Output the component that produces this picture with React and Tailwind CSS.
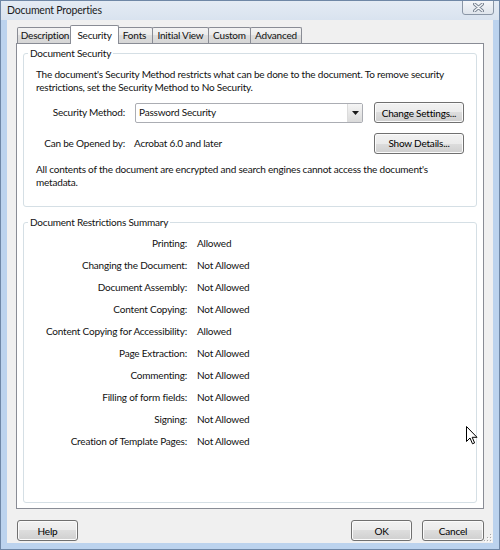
import { useState } from 'react'

const tabs = [
  { name: 'Description', width: 'w-[56px]' },
  { name: 'Security', width: 'w-[49px]' },
  { name: 'Fonts', width: 'w-[37px]' },
  { name: 'Initial View', width: 'w-[57px]' },
  { name: 'Custom', width: 'w-[43px]' },
  { name: 'Advanced', width: 'w-[52px]' },
]

const restrictions = [
  ['Printing', 'Allowed'],
  ['Changing the Document', 'Not Allowed'],
  ['Document Assembly', 'Not Allowed'],
  ['Content Copying', 'Not Allowed'],
  ['Content Copying for Accessibility', 'Allowed'],
  ['Page Extraction', 'Not Allowed'],
  ['Commenting', 'Not Allowed'],
  ['Filling of form fields', 'Not Allowed'],
  ['Signing', 'Not Allowed'],
  ['Creation of Template Pages', 'Not Allowed'],
]

function Button({ children, className = '' }) {
  return (
    <button
      type="button"
      className={`h-[21px] rounded-[3px] border border-[#707070] bg-[linear-gradient(to_bottom,#f2f2f2_0%,#ebebeb_50%,#dddddd_50%,#cfcfcf_100%)] shadow-[inset_0_0_0_1px_#fbfbfb] text-black leading-none ${className}`}
    >
      {children}
    </button>
  )
}

function App() {
  const [active, setActive] = useState('Security')

  return (
    <div className="relative w-[500px] h-[550px] overflow-hidden border border-[#6f87a6] bg-[#bcd3ee] font-['Lato',sans-serif] text-[10px] tracking-[-0.2px] text-[#111] select-none">
      {/* title bar */}
      <div className="relative h-[19px] flex items-center pl-[6px] bg-[linear-gradient(to_bottom,#e4ebf4,#d9e3ef)] text-[10.5px] text-[#1b1b1b]">
        Document Properties
        <div className="absolute right-[5px] top-[-1px] w-[32px] h-[15px] flex items-center justify-center rounded-b-[3px] border border-[#8a96a6] bg-[linear-gradient(to_bottom,#f4f6f9,#dfe5ec)]">
          <svg width="11" height="9" viewBox="0 0 11 9">
            <path d="M1.5 1 L9.5 8 M9.5 1 L1.5 8" stroke="#76818f" strokeWidth="3.2" strokeLinecap="round" />
            <path d="M1.5 1 L9.5 8 M9.5 1 L1.5 8" stroke="#f4f6f9" strokeWidth="1.4" strokeLinecap="round" />
          </svg>
        </div>
      </div>

      {/* window body */}
      <div className="relative mx-[6px] h-[523px] bg-[#f0f0f0] px-[9px] flex flex-col">
        {/* tabs */}
        <div className="h-[23px] flex items-end pl-[1px]">
          {tabs.map((tab, i) =>
            tab.name === active ? (
              <div
                key={tab.name}
                onClick={() => setActive(tab.name)}
                className={`relative z-10 ${tab.width} h-[19px] ml-[-3px] mr-[-2px] mb-[-1px] border border-b-0 border-[#898c95] rounded-t-[2px] bg-white flex items-start justify-center pt-[2px] whitespace-nowrap`}
              >
                {tab.name}
              </div>
            ) : (
              <div
                key={tab.name}
                onClick={() => setActive(tab.name)}
                className={`${tab.width} h-[16px] ${i > 0 ? '-ml-px' : ''} border border-b-0 border-[#898c95] rounded-t-[2px] bg-[linear-gradient(to_bottom,#f3f3f3_0%,#ebebeb_50%,#dedede_50%,#d6d6d6_100%)] flex items-center justify-center whitespace-nowrap`}
              >
                {tab.name}
              </div>
            )
          )}
        </div>

        {/* tab page */}
        <div className="h-[466px] border border-[#898c95] bg-white px-[6px] pt-[2px]">
          <fieldset className="h-[161px] border border-[#d5dfe5] rounded-[3px]">
            <legend className="ml-[4px] px-[2px] leading-[14px]">Document Security</legend>
            <div className="px-[12px]">
              <p className="mt-[8px] leading-[13px] whitespace-nowrap">
                The document's Security Method restricts what can be done to the document. To remove security
                <br />
                restrictions, set the Security Method to No Security.
              </p>

              <div className="mt-[8px] h-[21px] flex items-center">
                <span className="w-[89px] text-right">Security Method:</span>
                <div className="ml-[10px] w-[228px] h-[20px] flex items-center border border-[#abadb3] rounded-[2px] bg-white">
                  <span className="flex-1 pl-[3px]">Password Security</span>
                  <div className="w-[15px] h-full flex items-center justify-center border-l border-[#dcdcdc] bg-[linear-gradient(to_bottom,#f5f5f5,#dadada)]">
                    <svg width="7" height="4" viewBox="0 0 7 4">
                      <path d="M0 0 H7 L3.5 4 Z" fill="#1a1a1a" />
                    </svg>
                  </div>
                </div>
                <Button className="ml-[11px] w-[90px] h-[20px]">Change Settings...</Button>
              </div>

              <div className="mt-[10px] h-[20px] flex items-center">
                <span className="w-[89px] text-right">Can be Opened by:</span>
                <span className="ml-[9px] w-[229px]">Acrobat 6.0 and later</span>
                <Button className="ml-[11px] w-[90px] h-[20px]">Show Details...</Button>
              </div>

              <p className="mt-[10px] leading-[13px] whitespace-nowrap">
                All contents of the document are encrypted and search engines cannot access the document's
                <br />
                metadata.
              </p>
            </div>
          </fieldset>

          <fieldset className="mt-[8px] h-[288px] border border-[#d5dfe5] rounded-[3px]">
            <legend className="ml-[4px] px-[2px] leading-[14px]">Document Restrictions Summary</legend>
            <div className="mt-[3px]">
              {restrictions.map(([label, value]) => (
                <div key={label} className="h-[22.1px] flex items-center">
                  <span className="w-[163px] text-right">{label}:</span>
                  <span className="ml-[10px]">{value}</span>
                </div>
              ))}
            </div>
          </fieldset>
        </div>

        {/* buttons */}
        <div className="mt-[11px] flex items-center">
          <Button className="ml-[1px] w-[61px]">Help</Button>
          <div className="flex-1" />
          <Button className="w-[61px]">OK</Button>
          <Button className="ml-[10px] w-[62px]">Cancel</Button>
        </div>

        {/* size grip */}
        <svg className="absolute right-[1px] bottom-[1px]" width="8" height="8" viewBox="0 0 8 8">
          <g fill="#ffffff">
            <rect x="7" y="1" width="1" height="1" />
            <rect x="4" y="4" width="1" height="1" />
            <rect x="7" y="4" width="1" height="1" />
            <rect x="1" y="7" width="1" height="1" />
            <rect x="4" y="7" width="1" height="1" />
            <rect x="7" y="7" width="1" height="1" />
          </g>
          <g fill="#a8a8a8">
            <rect x="6" y="0" width="1" height="1" />
            <rect x="3" y="3" width="1" height="1" />
            <rect x="6" y="3" width="1" height="1" />
            <rect x="0" y="6" width="1" height="1" />
            <rect x="3" y="6" width="1" height="1" />
            <rect x="6" y="6" width="1" height="1" />
          </g>
        </svg>
      </div>

      {/* mouse pointer */}
      <svg className="absolute left-[465px] top-[425px]" width="12" height="19" viewBox="0 0 12 19">
        <path d="M0.5 0.5 V15.5 L4 12 L6.5 17.8 L8.6 16.9 L6.2 11.3 H11 Z" fill="#ffffff" stroke="#000000" strokeWidth="1" strokeLinejoin="round" />
      </svg>
    </div>
  )
}

export default App
